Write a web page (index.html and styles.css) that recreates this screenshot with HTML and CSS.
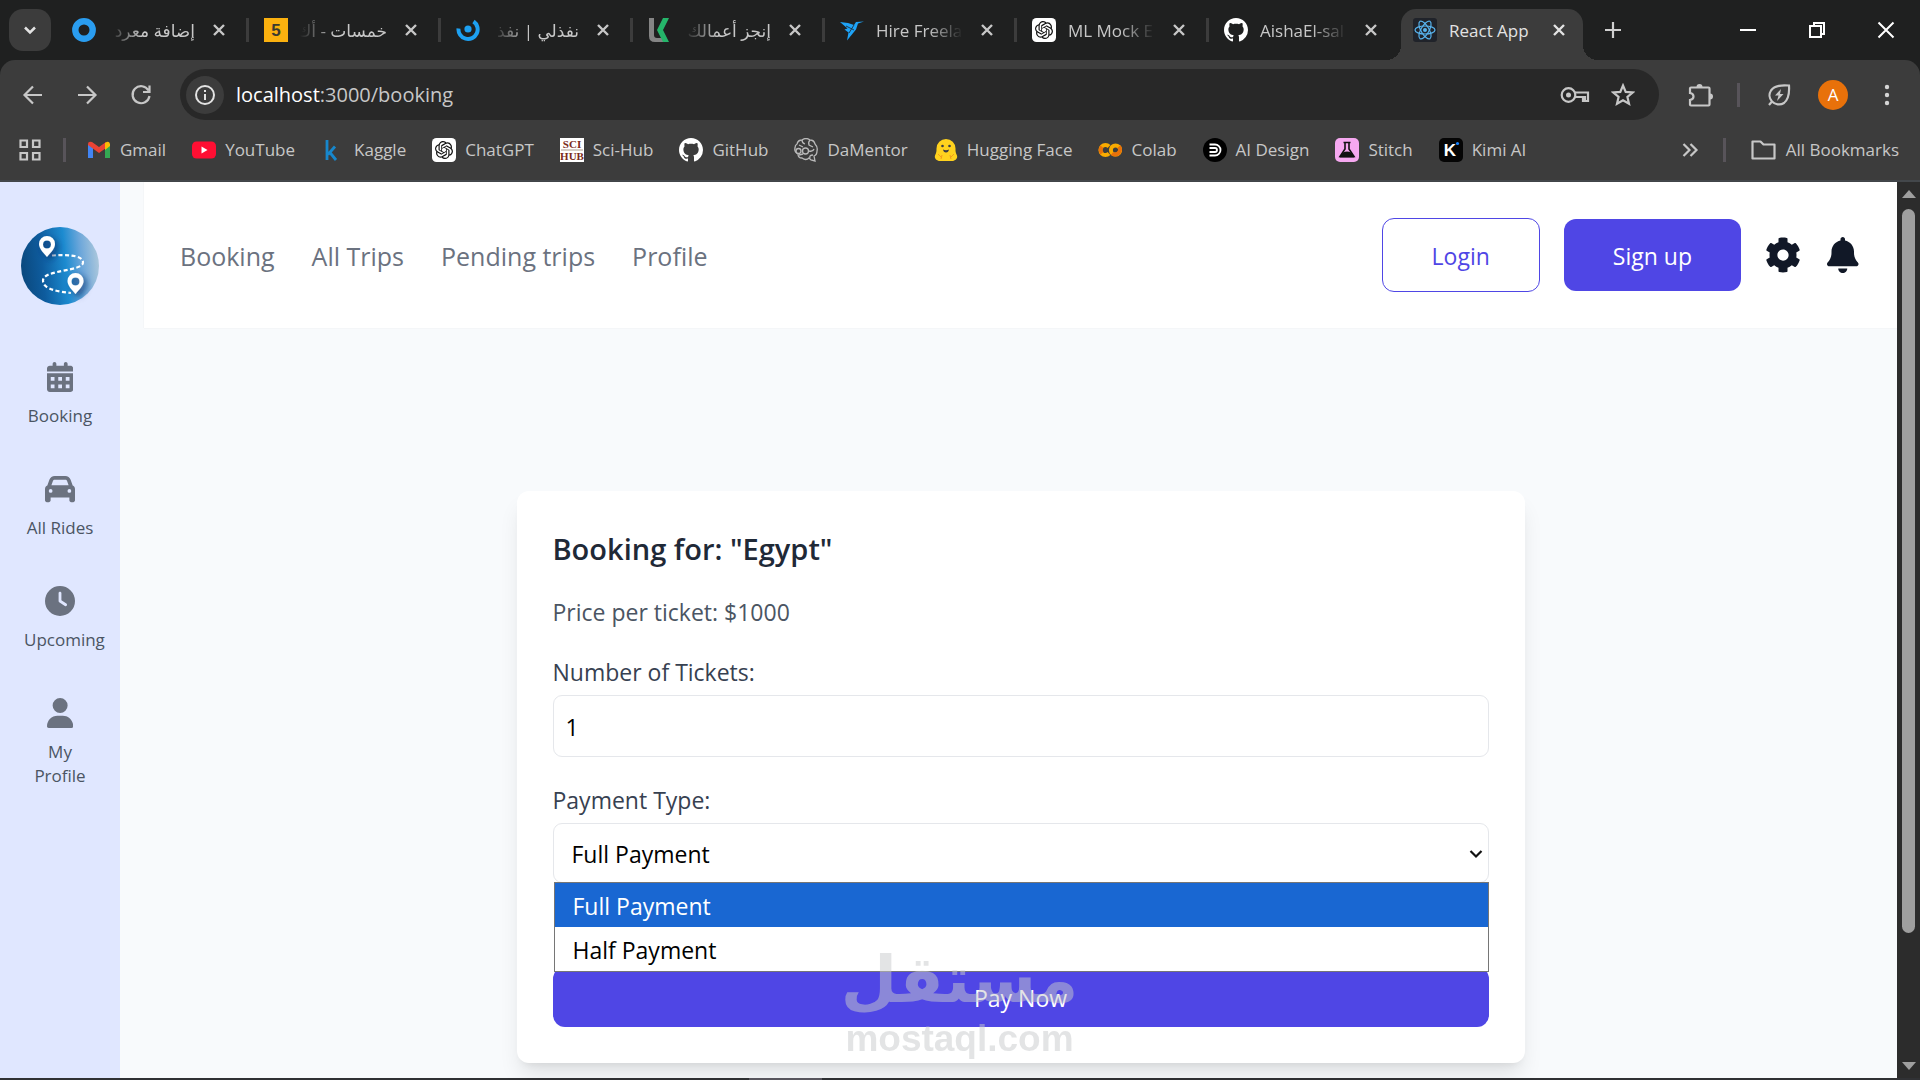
FILE: index.html
```html
<!DOCTYPE html>
<html lang="en">

<head>
  <meta charset="UTF-8">
  <meta name="viewport" content="width=device-width, initial-scale=1.0">
  <title>React App</title>
  <link rel="stylesheet" href="styles.css">
</head>

<body>
  <!-- Shared icons -->
  <svg class="sprite" aria-hidden="true">
    <symbol id="icon-close" viewBox="0 0 24 24">
      <path d="M7 7l10 10M17 7L7 17" fill="none" stroke="currentColor" stroke-width="2.4" />
    </symbol>
    <symbol id="icon-github" viewBox="0 0 16 16">
      <path fill="#fff" d="M8 0C3.58 0 0 3.58 0 8c0 3.54 2.29 6.53 5.47 7.59.4.07.55-.17.55-.38 0-.19-.01-.82-.01-1.49-2.01.37-2.53-.49-2.69-.94-.09-.23-.48-.94-.82-1.13-.28-.15-.68-.52-.01-.53.63-.01 1.08.58 1.23.82.72 1.21 1.87.87 2.33.66.07-.52.28-.87.51-1.07-1.78-.2-3.64-.89-3.64-3.95 0-.87.31-1.59.82-2.15-.08-.2-.36-1.02.08-2.12 0 0 .67-.21 2.2.82.64-.18 1.32-.27 2-.27s1.36.09 2 .27c1.53-1.04 2.2-.82 2.2-.82.44 1.1.16 1.92.08 2.12.51.56.82 1.27.82 2.15 0 3.07-1.87 3.75-3.65 3.95.29.25.54.73.54 1.48 0 1.07-.01 1.93-.01 2.2 0 .21.15.46.55.38A8.01 8.01 0 0 0 16 8c0-4.42-3.58-8-8-8z" />
    </symbol>
    <symbol id="icon-openai" viewBox="-4 -4 32 32">
      <rect x="-4" y="-4" width="32" height="32" rx="6" fill="#fff" />
      <path fill="#111" d="M22.2819 9.8211a5.9847 5.9847 0 0 0-.5157-4.9108 6.0462 6.0462 0 0 0-6.5098-2.9A6.0651 6.0651 0 0 0 4.9807 4.1818a5.9847 5.9847 0 0 0-3.9977 2.9 6.0462 6.0462 0 0 0 .7427 7.0966 5.98 5.98 0 0 0 .511 4.9107 6.051 6.051 0 0 0 6.5146 2.9001A5.9847 5.9847 0 0 0 13.2599 24a6.0557 6.0557 0 0 0 5.7718-4.2058 5.9894 5.9894 0 0 0 3.9977-2.9001 6.0557 6.0557 0 0 0-.7475-7.0729zm-9.022 12.6081a4.4755 4.4755 0 0 1-2.8764-1.0408l.1419-.0804 4.7783-2.7582a.7948.7948 0 0 0 .3927-.6813v-6.7369l2.02 1.1686a.071.071 0 0 1 .038.052v5.5826a4.504 4.504 0 0 1-4.4945 4.4944zm-9.6607-4.1254a4.4708 4.4708 0 0 1-.5346-3.0137l.142.0852 4.783 2.7582a.7712.7712 0 0 0 .7806 0l5.8428-3.3685v2.3324a.0804.0804 0 0 1-.0332.0615L9.74 19.9502a4.4992 4.4992 0 0 1-6.1408-1.6464zM2.3408 7.8956a4.485 4.485 0 0 1 2.3655-1.9728V11.6a.7664.7664 0 0 0 .3879.6765l5.8144 3.3543-2.0201 1.1685a.0757.0757 0 0 1-.071 0l-4.8303-2.7865A4.504 4.504 0 0 1 2.3408 7.872zm16.5963 3.8558L13.1038 8.364 15.1192 7.2a.0757.0757 0 0 1 .071 0l4.8303 2.7913a4.4944 4.4944 0 0 1-.6765 8.1042v-5.6772a.79.79 0 0 0-.407-.667zm2.0107-3.0231l-.142-.0852-4.7735-2.7818a.7759.7759 0 0 0-.7854 0L9.409 9.2297V6.8974a.0662.0662 0 0 1 .0284-.0615l4.8303-2.7866a4.4992 4.4992 0 0 1 6.6802 4.66zM8.3065 12.863l-2.02-1.1638a.0804.0804 0 0 1-.038-.0567V6.0742a4.4992 4.4992 0 0 1 7.3757-3.4537l-.142.0805L8.704 5.459a.7948.7948 0 0 0-.3927.6813zm1.0976-2.3654l2.602-1.4998 2.6069 1.4998v2.9994l-2.5974 1.4997-2.6067-1.4997Z" />
    </symbol>
  </svg>

  <!-- Browser window -->
  <div class="browser">
    <div class="tab-strip">
      <button class="tab-search" aria-label="Search tabs">
        <svg viewBox="0 0 24 24"><path d="M7 9.500l5 5 5-5" fill="none" stroke="#e3e3e3" stroke-width="2.500" /></svg>
      </button>

      <div class="tab">
        <svg class="favicon" viewBox="0 0 24 24"><circle cx="12" cy="12" r="8.700" fill="none" stroke="#2a9df0" stroke-width="6.400" /></svg>
        <span class="tab-title rtl" dir="rtl">إضافة معرد</span>
        <button class="tab-close" aria-label="Close"><svg><use href="#icon-close" /></svg></button>
      </div>
      <div class="tab">
        <svg class="favicon" viewBox="0 0 24 24"><rect width="24" height="24" fill="#fbb10f" /><text x="12" y="18" text-anchor="middle" class="five">5</text></svg>
        <span class="tab-title rtl" dir="rtl">خمسات - أك</span>
        <button class="tab-close" aria-label="Close"><svg><use href="#icon-close" /></svg></button>
      </div>
      <div class="tab">
        <svg class="favicon" viewBox="0 0 24 24"><path d="M2.500 10.500A9.600 9.600 0 1 0 17.500 3.500" fill="none" stroke="#1da1f2" stroke-width="4" /><circle cx="12" cy="11" r="3.600" fill="#1da1f2" /></svg>
        <span class="tab-title rtl" dir="rtl">نفذلي | نفذ</span>
        <button class="tab-close" aria-label="Close"><svg><use href="#icon-close" /></svg></button>
      </div>
      <div class="tab">
        <svg class="favicon" viewBox="0 0 24 24"><path d="M1 0h5v17q0 3 3 3h6l2 4H7q-6 0-6-6z" fill="#858585" /><path d="M15 0h6l-6 12 6 12h-6L9 12z" fill="#25b56a" /></svg>
        <span class="tab-title rtl" dir="rtl">إنجز أعمالك</span>
        <button class="tab-close" aria-label="Close"><svg><use href="#icon-close" /></svg></button>
      </div>
      <div class="tab">
        <svg class="favicon" viewBox="0 0 24 24"><path d="M0 4l8 1 6 2 2-3 8-.500-6 2-2 6-9 11 1.500-8-4-3 3-1z" fill="#1ea3f7" /><path d="M6 8l8 4M14 7l-5 8" stroke="#1f2020" stroke-width=".8" /></svg>
        <span class="tab-title">Hire Freela</span>
        <button class="tab-close" aria-label="Close"><svg><use href="#icon-close" /></svg></button>
      </div>
      <div class="tab">
        <svg class="favicon"><use href="#icon-openai" /></svg>
        <span class="tab-title">ML Mock E</span>
        <button class="tab-close" aria-label="Close"><svg><use href="#icon-close" /></svg></button>
      </div>
      <div class="tab last">
        <svg class="favicon"><use href="#icon-github" /></svg>
        <span class="tab-title">AishaEl-sal</span>
        <button class="tab-close" aria-label="Close"><svg><use href="#icon-close" /></svg></button>
      </div>
      <div class="tab active">
        <svg class="favicon" viewBox="0 0 24 24">
          <rect width="24" height="24" rx="3" fill="#20232a" />
          <g fill="none" stroke="#58b4ee" stroke-width="1.200">
            <ellipse cx="12" cy="12" rx="10" ry="4" />
            <ellipse cx="12" cy="12" rx="10" ry="4" transform="rotate(60 12 12)" />
            <ellipse cx="12" cy="12" rx="10" ry="4" transform="rotate(120 12 12)" />
          </g>
          <circle cx="12" cy="12" r="2" fill="#58b4ee" />
        </svg>
        <span class="tab-title full">React App</span>
        <button class="tab-close" aria-label="Close"><svg><use href="#icon-close" /></svg></button>
      </div>

      <button class="new-tab" aria-label="New tab">
        <svg viewBox="0 0 24 24"><path d="M12 4v16M4 12h16" stroke="#d0d0d0" stroke-width="2.200" /></svg>
      </button>
      <div class="window-controls">
        <button aria-label="Minimize"><svg viewBox="0 0 24 24"><path d="M4 12h16" stroke="#fff" stroke-width="2" /></svg></button>
        <button aria-label="Restore"><svg viewBox="0 0 24 24" fill="none" stroke="#fff" stroke-width="2"><path d="M5 8h11v11H5zM9 8V5h10v11h-3" /></svg></button>
        <button aria-label="Close window"><svg viewBox="0 0 24 24"><path d="M4.500 4.500l15 15M19.500 4.500l-15 15" stroke="#fff" stroke-width="2" /></svg></button>
      </div>
    </div>

    <div class="toolbar">
      <button class="tool" aria-label="Back"><svg viewBox="0 0 24 24"><path d="M21 12H4M12 3.500L3.500 12l8.500 8.500" /></svg></button>
      <button class="tool" aria-label="Forward"><svg viewBox="0 0 24 24"><path d="M3 12h17M12 3.500l8.500 8.500-8.500 8.500" /></svg></button>
      <button class="tool" aria-label="Reload"><svg viewBox="0 0 24 24"><path d="M19.500 7.500A8.500 8.500 0 1 0 20.500 13M20.500 2.500V9H14" /></svg></button>
      <div class="omnibox">
        <button class="site-info" aria-label="Site information">
          <svg viewBox="0 0 24 24"><circle cx="12" cy="12" r="9" fill="none" stroke="#e3e3e3" stroke-width="2" /><path d="M12 11v6M12 7v2" stroke="#e3e3e3" stroke-width="2" /></svg>
        </button>
        <span class="url"><b>localhost</b>:3000/booking</span>
        <button class="tool" aria-label="Passwords">
          <svg class="key" viewBox="0 0 30 24"><circle cx="8.500" cy="12" r="6.800" /><circle cx="8.500" cy="12" r="2.500" fill="#c7c7c7" stroke="none" /><path d="M14.500 9.500H28v8.500h-5v-4h-8M25 13v4" /></svg>
        </button>
        <button class="tool" aria-label="Bookmark this tab">
          <svg viewBox="0 0 24 24"><path d="M12 2.500l2.700 6.400 6.900.6-5.200 4.500 1.600 6.800-6-3.600-6 3.600 1.600-6.800L2.400 9.500l6.900-.6z" /></svg>
        </button>
      </div>
      <div class="toolbar-end">
        <button class="tool" aria-label="Extensions">
          <svg viewBox="0 0 26 26"><path d="M3 5.500h17.500q1 0 1 1v16q0 1-1 1H3q-1 0-1-1v-4.500q3.500-.500 3.500-3.500T2 11V6.500q0-1 1-1z" /><path d="M8.500 5a3 3 0 0 1 6 0zM22 11.500a3 3 0 0 1 0 6z" fill="#c7c7c7" stroke="none" /></svg>
        </button>
        <span class="divider"></span>
        <button class="tool" aria-label="Energy saver">
          <svg viewBox="0 0 24 24"><path d="M2 22l3-3.500A9 9 0 0 1 4 7.500C8 2 15 2 22 2.500 22.500 10 22 16 17 20c-4 2.500-9 1.500-12-1.500" /><path d="M14 6l-6 6.500h3.500L10 18l6.500-7H13z" fill="#c7c7c7" stroke="none" /></svg>
        </button>
        <button class="avatar" aria-label="Account">A</button>
        <button class="tool" aria-label="Menu">
          <svg viewBox="0 0 24 24"><g fill="#d5d5d5" stroke="none"><circle cx="12" cy="4" r="2.200" /><circle cx="12" cy="12" r="2.200" /><circle cx="12" cy="20" r="2.200" /></g></svg>
        </button>
      </div>
    </div>

    <div class="bookmarks">
      <button class="tool apps" aria-label="Apps">
        <svg viewBox="0 0 24 24"><path d="M2.500 2.500h6.500v6.500h-6.500zM15 2.500h6.500v6.500H15zM2.500 15h6.500v6.500h-6.500zM15 15h6.500v6.500H15z" /></svg>
      </button>
      <span class="divider"></span>
      <nav class="bookmark-list">
        <a href="#"><svg viewBox="0 0 24 24"><path d="M1 6v14h5V10z" fill="#4285f4" /><path d="M23 6v14h-5V10z" fill="#34a853" /><path d="M1 6q0-3 4-2l7 5 7-5v6l-7 5-11-8z" fill="#ea4335" /><path d="M18 5q4-3 5 1v2l-5 4z" fill="#fbbc04" /></svg>Gmail</a>
        <a href="#"><svg viewBox="0 0 24 24"><rect y="3.500" width="24" height="17" rx="4.500" fill="#ff0f33" /><path d="M9.500 8.500l6 3.500-6 3.500z" fill="#fff" /></svg>YouTube</a>
        <a href="#"><svg viewBox="0 0 24 24"><path d="M6 2v20M14 8.500l-7 8M8.500 14l6.500 8" fill="none" stroke="#1787cc" stroke-width="2.800" /></svg>Kaggle</a>
        <a href="#"><svg><use href="#icon-openai" /></svg>ChatGPT</a>
        <a href="#"><svg viewBox="0 0 24 24"><rect width="24" height="24" fill="#fff" /><text x="12" y="10" class="sci">SCI</text><path d="M1 12h22" stroke="#a98" /><text x="12" y="22" class="sci">HUB</text></svg>Sci-Hub</a>
        <a href="#"><svg><use href="#icon-github" /></svg>GitHub</a>
        <a href="#"><svg viewBox="0 0 24 24" fill="none" stroke="#b9b9b9" stroke-width="1.300"><path d="M8 2q4-3 8 0 4 0 5 4 3 3 2 7 0 4-3 5l1 5-4-1-2-2q-3 3-7 0-4 0-4-4-4-2-3-6 0-3 2-4 1-4 5-4z" /><circle cx="11.500" cy="13" r="3" /><circle cx="4.500" cy="13" r="2.500" /><path d="M8 2q0 3 3 4M16 2q-2 2-1 5l4 2M5 7l4 2M15 13q4 1 5-2M5 17l4-1M16 20q-1-3 3-3" /></svg>DaMentor</a>
        <a href="#"><svg viewBox="0 0 24 24"><path d="M12 1a9.500 9.500 0 0 1 9.500 9.500c0 3 0 4 1.500 7 1 3-2 5.500-5 5.500H6c-3 0-6-2.500-5-5.500 1.500-3 1.500-4 1.500-7A9.500 9.500 0 0 1 12 1z" fill="#ffd21e" /><path d="M4 16l4 4M20 16l-4 4M8 17l-1 4M16 17l1 4" stroke="#f39c1c" /><circle cx="8.500" cy="8" r="1.300" fill="#3a3b45" /><circle cx="15.500" cy="8" r="1.300" fill="#3a3b45" /><path d="M9 11.500q3 1.500 6 0-.500 3-3 3t-3-3z" fill="#3a3b45" /></svg>Hugging Face</a>
        <a href="#"><svg viewBox="0 0 24 24" fill="none" stroke-width="4"><path d="M11 8.500a5 5 0 1 0 0 7" stroke="#f9ab00" /><circle cx="17.500" cy="12" r="4.600" stroke="#f9ab00" /><path d="M14 15.500a5 5 0 0 0 7-7M4 8.700a5 5 0 0 0 0 6.600" stroke="#e8710a" /></svg>Colab</a>
        <a href="#"><svg viewBox="0 0 24 24"><circle cx="12" cy="12" r="12" fill="#000" /><path d="M6.500 6.500h5.500a5.500 5.500 0 0 1 0 11H6.500M6.500 10h5.500a2 2 0 0 1 0 4H6.500" fill="none" stroke="#fff" stroke-width="1.800" /></svg>AI Design</a>
        <a href="#"><svg viewBox="0 0 24 24"><rect width="24" height="24" rx="5" fill="#f6a8f0" /><path d="M8.500 4.500h7M10 5v6l-5 7.500h14L14 11V5" fill="none" stroke="#111" stroke-width="1.600" /><path d="M8 14.500q4-2 8 0l3.500 5h-15z" fill="#111" /></svg>Stitch</a>
        <a href="#"><svg viewBox="0 0 24 24"><rect width="24" height="24" rx="5" fill="#050505" /><text x="11" y="18" text-anchor="middle" class="kimi">K</text><circle cx="18.500" cy="5.500" r="1.600" fill="#1783ff" /></svg>Kimi AI</a>
      </nav>
      <div class="bookmarks-end">
        <button class="tool" aria-label="More bookmarks"><svg viewBox="0 0 24 24"><path d="M5.500 6l6 6-6 6M12.500 6l6 6-6 6" /></svg></button>
        <span class="divider"></span>
        <a href="#"><svg class="folder" viewBox="0 0 26 24"><path d="M2 3.500h8l3 3h11v14H2z" fill="none" stroke="#c7c7c7" stroke-width="2.200" stroke-linejoin="round" /></svg>All Bookmarks</a>
      </div>
    </div>
  </div>

  <!-- Page -->
  <div class="viewport">
    <aside class="sidebar">
      <svg class="logo" viewBox="0 0 78 78" role="img" aria-label="Trips logo">
        <defs>
          <linearGradient id="logoFill" x1="0" y1=".3" x2="1" y2=".2">
            <stop offset="0" stop-color="#0b4a80" />
            <stop offset=".25" stop-color="#0e5c9e" />
            <stop offset=".55" stop-color="#1c8bd0" />
            <stop offset=".75" stop-color="#6ba6da" />
            <stop offset="1" stop-color="#b3cbdc" />
          </linearGradient>
          <filter id="logoShadow" x="-50%" y="-50%" width="200%" height="200%">
            <feDropShadow dx="3" dy="3" stdDeviation="3" flood-color="#0c2c66" flood-opacity=".8" />
          </filter>
        </defs>
        <circle cx="39" cy="39" r="39" fill="url(#logoFill)" />
        <path d="M31 28.500c12-1 31-1 31 7 0 9-40 7-40 18 0 9 15 11 28 12.500" fill="none" stroke="#fff" stroke-width="2.200" stroke-dasharray="4 2.500" />
        <g filter="url(#logoShadow)" fill="#fff" fill-rule="evenodd">
          <path d="M26 9a8 8 0 0 1 8 8c0 5-5 9-8 13-3-4-8-8-8-13a8 8 0 0 1 8-8zm0 4.500a4 4 0 1 0 0 8 4 4 0 1 0 0-8z" />
          <path d="M54.500 46a8 8 0 0 1 8 8c0 5-5 9-8 13-3-4-8-8-8-13a8 8 0 0 1 8-8zm0 4.500a4 4 0 1 0 0 8 4 4 0 1 0 0-8z" />
        </g>
      </svg>
      <nav class="side-nav">
        <a href="#">
          <svg viewBox="0 0 448 512"><path fill-rule="evenodd" d="M128 0c18 0 32 14 32 32v32h128V32c0-18 14-32 32-32s32 14 32 32v32h48c26 0 48 22 48 48v48H0v-48c0-26 22-48 48-48h48V32c0-18 14-32 32-32zM0 192h448v272c0 26-22 48-48 48H48c-26 0-48-22-48-48zM64 256v64h64v-64zm128 0v64h64v-64zm128 0v64h64v-64zM64 384v64h64v-64zm128 0v64h64v-64zm128 0v64h64v-64z" /></svg>
          <span>Booking</span>
        </a>
        <a href="#">
          <svg viewBox="0 0 512 512"><path d="M135.2 117.4L109.1 192H402.9l-26.1-74.6C372.3 104.6 360.2 96 346.6 96H165.4c-13.6 0-25.7 8.6-30.2 21.4zM39.6 196.8L74.8 96.3C88.3 57.8 124.6 32 165.4 32H346.6c40.8 0 77.1 25.8 90.6 64.3l35.2 100.5c23.2 9.600 39.6 32.5 39.6 59.2V400v48c0 17.7-14.3 32-32 32H448c-17.7 0-32-14.3-32-32V400H96v48c0 17.7-14.3 32-32 32H32c-17.7 0-32-14.3-32-32V400 256c0-26.7 16.4-49.6 39.6-59.2zM128 288a32 32 0 1 0 -64 0 32 32 0 1 0 64 0zm288 32a32 32 0 1 0 0-64 32 32 0 1 0 0 64z" /></svg>
          <span>All Rides</span>
        </a>
        <a href="#">
          <svg viewBox="0 0 512 512"><path d="M256 0a256 256 0 1 1 0 512A256 256 0 1 1 256 0zM232 120V256c0 8 4 15.5 10.7 20l96 64c11 7.4 25.9 4.4 33.3-6.7s4.4-25.9-6.7-33.3L280 243.2V120c0-13.3-10.7-24-24-24s-24 10.7-24 24z" /></svg>
          <span>Upcoming</span>
        </a>
        <a href="#">
          <svg viewBox="0 0 448 512"><path d="M224 256A128 128 0 1 0 224 0a128 128 0 1 0 0 256zm-45.7 48C79.8 304 0 383.8 0 482.3C0 498.7 13.3 512 29.7 512H418.3c16.4 0 29.7-13.3 29.7-29.7C448 383.8 368.2 304 269.7 304H178.3z" /></svg>
          <span>My Profile</span>
        </a>
      </nav>
    </aside>

    <main class="content">
      <header class="header">
        <nav class="main-nav">
          <a href="#">Booking</a>
          <a href="#">All Trips</a>
          <a href="#">Pending trips</a>
          <a href="#">Profile</a>
        </nav>
        <div class="header-actions">
          <button class="btn btn-outline">Login</button>
          <button class="btn btn-primary">Sign up</button>
          <button class="icon-btn" aria-label="Settings">
            <svg viewBox="0 0 512 512"><path d="M487.4 315.7l-42.6-24.6c4.3-23.2 4.3-47 0-70.2l42.6-24.6c4.9-2.8 7.1-8.6 5.5-14-11.1-35.6-30-67.8-54.7-94.6-3.8-4.1-10-5.1-14.8-2.3L380.8 110c-17.9-15.4-38.5-27.3-60.8-35.1V25.8c0-5.6-3.9-10.5-9.4-11.7-36.7-8.2-74.3-7.8-109.2 0-5.5 1.2-9.4 6.1-9.4 11.7V75c-22.2 7.9-42.8 19.8-60.8 35.1L88.7 85.5c-4.9-2.8-11-1.9-14.8 2.3-24.7 26.7-43.6 58.9-54.7 94.6-1.7 5.4.6 11.2 5.5 14L67.3 221c-4.3 23.2-4.3 47 0 70.2l-42.6 24.6c-4.9 2.8-7.1 8.6-5.5 14 11.1 35.6 30 67.8 54.7 94.6 3.8 4.1 10 5.1 14.8 2.3l42.6-24.6c17.9 15.4 38.5 27.3 60.8 35.1v49.2c0 5.6 3.9 10.5 9.4 11.7 36.7 8.2 74.3 7.8 109.2 0 5.5-1.2 9.4-6.1 9.4-11.7v-49.2c22.2-7.9 42.8-19.8 60.8-35.1l42.6 24.6c4.900 2.8 11 1.9 14.8-2.3 24.7-26.7 43.6-58.9 54.7-94.6 1.5-5.5-.7-11.3-5.6-14.1zM256 336c-44.1 0-80-35.9-80-80s35.9-80 80-80 80 35.9 80 80-35.900 80-80 80z" /></svg>
          </button>
          <button class="icon-btn" aria-label="Notifications">
            <svg viewBox="0 0 448 512"><path d="M224 0c-17.7 0-32 14.3-32 32V51.2C119 66 64 130.6 64 208v18.8c0 47-17.3 92.4-48.5 127.6l-7.4 8.3c-8.4 9.4-10.4 22.9-5.3 34.4S19.4 416 32 416H416c12.6 0 24-7.4 29.2-18.900s3.1-25-5.3-34.4l-7.4-8.3C401.3 319.2 384 273.9 384 226.8V208c0-77.4-55-142-128-156.8V32c0-17.7-14.3-32-32-32zm45.3 493.3c12-12 18.7-28.3 18.7-45.3H224 160c0 17 6.7 33.3 18.7 45.3s28.3 18.7 45.3 18.7s33.3-6.7 45.3-18.7z" /></svg>
          </button>
        </div>
      </header>

      <form class="card">
        <h2>Booking for: "Egypt"</h2>
        <p class="price">Price per ticket: $1000</p>
        <label for="tickets">Number of Tickets:</label>
        <input type="text" inputmode="numeric" id="tickets" value="1">
        <label for="payment">Payment Type:</label>
        <div class="select-wrap">
          <select id="payment">
            <option selected>Full Payment</option>
            <option>Half Payment</option>
          </select>
          <svg class="chevron" viewBox="0 0 14 14"><path d="M1.500 4l5.500 5.500L12.500 4" fill="none" stroke="#111" stroke-width="2.200" /></svg>
          <ul class="select-menu" role="listbox" aria-label="Payment Type">
            <li class="selected" role="option">Full Payment</li>
            <li role="option">Half Payment</li>
          </ul>
        </div>
        <button type="button" class="btn btn-primary pay">Pay Now</button>
        <div class="watermark">
          <span class="watermark-name" lang="ar" dir="rtl">مستقل</span>
          <span class="watermark-site">mostaql.com</span>
        </div>
      </form>
    </main>

    <div class="scrollbar">
      <svg viewBox="0 0 16 10"><path d="M8 1l7 8H1z" /></svg>
      <div class="scroll-track"><div class="scroll-thumb"></div></div>
      <svg viewBox="0 0 16 10"><path d="M1 1h14L8 9z" /></svg>
    </div>
  </div>
  <div class="taskbar"><span></span></div>
</body>

</html>
```
FILE: styles.css
```css
* {
  box-sizing: border-box;
}

body {
  margin: 0;
  min-height: 100vh;
  display: flex;
  flex-direction: column;
  font-family: "Open Sans", "Noto Sans", sans-serif;
  font-size: 23px;
  line-height: 36px;
  color: #374151;
  background: #f8fafc;
}

h2,
p,
ul {
  margin: 0;
  padding: 0;
}

a {
  color: inherit;
  text-decoration: none;
}

button {
  font: inherit;
  color: inherit;
  background: none;
  border: none;
  padding: 0;
  cursor: pointer;
}

svg {
  display: block;
  flex: none;
}

.sprite {
  position: absolute;
  width: 0;
  height: 0;
}

/* Browser window */
.browser {
  background: #1f2020;
  color: #c7c7c7;
  font-size: 17px;
  line-height: 24px;
}

.tab-strip {
  display: flex;
  height: 60px;
  padding-left: 9px;
}

.tab-search {
  display: flex;
  align-items: center;
  justify-content: center;
  width: 42px;
  height: 42px;
  margin: 9px 6px 0 0;
  border-radius: 14px;
  background: #3c3c3c;
}

.tab-search svg,
.new-tab svg,
.window-controls svg,
.favicon,
.tab-close svg {
  width: 24px;
  height: 24px;
}

.tab {
  position: relative;
  display: flex;
  align-items: center;
  gap: 12px;
  width: 192px;
  height: 42px;
  margin-top: 9px;
  padding: 0 18px 0 15px;
}

.tab::after {
  content: "";
  position: absolute;
  right: 0;
  top: 9px;
  width: 3px;
  height: 24px;
  background: #3c3c3c;
}

.tab.last::after {
  display: none;
}

.tab-title {
  flex: 1;
  min-width: 0;
  padding-top: 2px;
  overflow: hidden;
  white-space: nowrap;
  mask-image: linear-gradient(to right, #000 60%, transparent 100%);
}

.tab-title.rtl {
  font-family: "Open Sans", "DejaVu Sans", sans-serif;
  mask-image: linear-gradient(to left, #000 60%, transparent 100%);
}

.tab-title.full {
  mask-image: none;
}

.tab.active {
  width: 182px;
  height: 51px;
  padding: 0 12px 9px;
  border-radius: 15px 15px 0 0;
  background: #3c3c3c;
  color: #e3e3e3;
}

.tab.active::before,
.tab.active::after {
  content: "";
  position: absolute;
  top: auto;
  bottom: 0;
  width: 15px;
  height: 15px;
  background: radial-gradient(circle at 0 0, transparent 15px, #3c3c3c 15px);
}

.tab.active::before {
  left: -15px;
}

.tab.active::after {
  right: -15px;
  background: radial-gradient(circle at 100% 0, transparent 15px, #3c3c3c 15px);
}

.new-tab {
  width: 60px;
  display: flex;
  align-items: center;
  justify-content: center;
}

.window-controls {
  display: flex;
  margin-left: auto;
}

.window-controls button {
  width: 69px;
  display: flex;
  align-items: center;
  justify-content: center;
}

.toolbar {
  display: flex;
  align-items: center;
  padding: 9px 6px 0;
  border-radius: 15px 15px 0 0;
  background: #3c3c3c;
}

.tool {
  display: flex;
  align-items: center;
  justify-content: center;
  width: 54px;
  height: 36px;
}

.tool svg {
  width: 24px;
  height: 24px;
  fill: none;
  stroke: #c7c7c7;
  stroke-width: 2.2px;
}

.tool .key {
  width: 30px;
}

.omnibox {
  flex: 1;
  display: flex;
  align-items: center;
  height: 51px;
  margin-left: 12px;
  padding: 0 12px 0 6px;
  border-radius: 26px;
  background: #282828;
}

.site-info {
  display: flex;
  align-items: center;
  justify-content: center;
  width: 38px;
  height: 38px;
  border-radius: 50%;
  background: #3c3c3c;
}

.site-info svg {
  width: 24px;
  height: 24px;
}

.url {
  flex: 1;
  padding-left: 12px;
  font-size: 20px;
}

.url b {
  font-weight: normal;
  color: #fff;
}

.omnibox .tool {
  width: 48px;
}

.toolbar-end {
  display: flex;
  align-items: center;
  padding-left: 15px;
}

.divider {
  width: 3px;
  height: 24px;
  background: #58545a;
}

.toolbar-end .divider {
  margin: 0 12px 0 9px;
}

.toolbar-end .tool:first-child svg {
  width: 26px;
  height: 26px;
}

.avatar {
  width: 30px;
  height: 30px;
  margin: 0 12px;
  border-radius: 50%;
  background: #e8710a;
  color: #fff;
  font-size: 17px;
  line-height: 30px;
}

.bookmarks {
  display: flex;
  align-items: center;
  height: 62px;
  padding: 0 21px 0 3px;
  border-bottom: 2px solid #43474b;
  background: #3c3c3c;
}

.bookmarks .divider {
  margin: 0 21px 0 6px;
}

.bookmarks svg {
  width: 24px;
  height: 24px;
}

.bookmark-list {
  display: flex;
  gap: 26px;
}

.bookmarks a {
  display: flex;
  align-items: center;
  gap: 9px;
  white-space: nowrap;
}

.bookmarks-end {
  display: flex;
  align-items: center;
  margin-left: auto;
}

.bookmarks-end .divider {
  margin: 0 24px 0 6px;
}

.bookmarks .folder {
  width: 27px;
}

.five {
  font: bold 17px "Liberation Sans", sans-serif;
  fill: #3a3a30;
}

.sci {
  font: bold 11px "Liberation Serif", serif;
  fill: #7c2a1a;
  text-anchor: middle;
}

.kimi {
  font: bold 17px "Liberation Sans", sans-serif;
  fill: #fff;
}

/* Page */
.viewport {
  flex: 1;
  display: flex;
}

.sidebar {
  width: 120px;
  padding: 45px 24px 0;
  background: #e0e7ff;
  color: #4b5563;
  font-size: 17px;
  line-height: 24px;
}

.logo {
  width: 78px;
  height: 78px;
  margin: 0 -3px 57px;
}

.side-nav {
  display: flex;
  flex-direction: column;
  gap: 46px;
}

.side-nav a {
  display: flex;
  flex-direction: column;
  align-items: center;
  gap: 12px;
  text-align: center;
}

.side-nav span {
  max-width: 100%;
}

.side-nav svg {
  height: 30px;
  fill: #6b7280;
}

.content {
  flex: 1;
  padding-left: 24px;
}

.header {
  display: flex;
  align-items: center;
  justify-content: space-between;
  padding: 36px;
  background: #fff;
  box-shadow: 0 0 1px rgba(0, 0, 0, 0.1);
}

.main-nav {
  display: flex;
  gap: 37px;
  padding-top: 2px;
  color: #6b7280;
  font-size: 25px;
}

.header-actions {
  display: flex;
  align-items: center;
  gap: 24px;
}

.btn {
  padding: 19px 49px 17px;
  border-radius: 12px;
}

.btn-outline {
  border: 1px solid #4f46e5;
  color: #4f46e5;
}

.btn-primary {
  background: #4f46e5;
  color: #fff;
}

.icon-btn {
  display: flex;
  justify-content: center;
  width: 36px;
}

.icon-btn svg {
  height: 36px;
  fill: #111827;
}

.card {
  position: relative;
  max-width: 1008px;
  margin: 163px auto 15px;
  padding: 37px 36px 36px;
  border-radius: 12px;
  background: #fff;
  box-shadow: 0 15px 22px -4px rgba(0, 0, 0, 0.1), 0 6px 9px -6px rgba(0, 0, 0, 0.1);
}

.card h2 {
  margin-bottom: 24px;
  color: #1f2937;
  font-size: 29px;
  font-weight: 600;
  line-height: 42px;
}

.price {
  margin-bottom: 24px;
  color: #4b5563;
}

.card label {
  display: block;
  margin-bottom: 5px;
}

.card input,
.card select {
  display: block;
  width: 100%;
  border: 1px solid #e5e7eb;
  border-radius: 9px;
  background: #fff;
  color: #000;
  font: inherit;
}

.card input {
  height: 62px;
  margin-bottom: 25px;
  padding: 13px 12px 11px;
}

.card select {
  height: 60px;
  padding: 2px 18px 0;
  appearance: none;
}

.select-wrap {
  position: relative;
  margin-bottom: 84px;
}

.chevron {
  position: absolute;
  right: 6px;
  top: 24px;
  width: 14px;
  height: 14px;
}

.select-menu {
  position: absolute;
  z-index: 1;
  top: 59px;
  left: 1px;
  right: 0;
  border: 1px solid #767676;
  background: #fff;
  color: #000;
  list-style: none;
}

.select-menu li {
  padding: 5px 18px 3px;
}

.select-menu .selected {
  background: #1967d2;
  color: #fff;
}

.pay {
  width: 100%;
  padding: 13px 12px 11px;
}

/* Translucent mark laid over the form */
.watermark {
  position: absolute;
  z-index: 2;
  left: 328px;
  bottom: 0;
  width: 230px;
  display: flex;
  flex-direction: column;
  align-items: center;
  color: #c8cacc;
  opacity: 0.5;
  pointer-events: none;
}

.watermark-name {
  font: bold 65px/70px "DejaVu Sans", sans-serif;
}

.watermark-site {
  font: bold 37px/48px "Liberation Sans", sans-serif;
}

.scrollbar {
  display: flex;
  flex-direction: column;
  align-items: center;
  width: 23px;
  padding: 7px 0;
  background: #2c2c2c;
}

.scrollbar svg {
  width: 16px;
  height: 10px;
  fill: #9f9f9f;
}

.scroll-track {
  flex: 1;
  width: 13px;
  padding: 10px 0;
}

.scroll-thumb {
  height: 86%;
  border-radius: 7px;
  background: #9f9f9f;
}

.taskbar {
  height: 2px;
  background: #303134;
}

.taskbar span {
  display: block;
  width: 73px;
  height: 2px;
  margin-left: 39%;
  background: #5a5860;
}
```
